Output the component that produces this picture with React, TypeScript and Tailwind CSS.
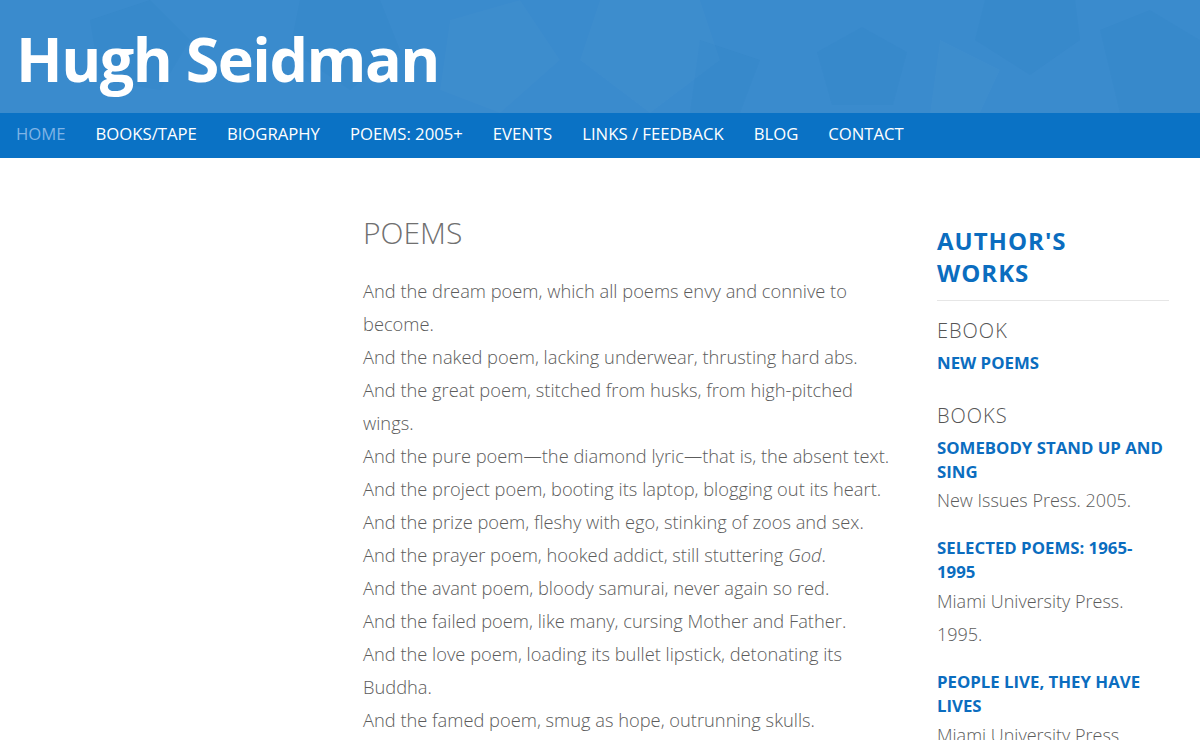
import React from "react";

const nav = ["HOME", "BOOKS/TAPE", "BIOGRAPHY", "POEMS: 2005+", "EVENTS", "LINKS / FEEDBACK", "BLOG", "CONTACT"];

const poem: React.ReactNode[] = [
  "And the dream poem, which all poems envy and connive to become.",
  "And the naked poem, lacking underwear, thrusting hard abs.",
  "And the great poem, stitched from husks, from high-pitched wings.",
  "And the pure poem\u2014the diamond lyric\u2014that is, the absent text.",
  "And the project poem, booting its laptop, blogging out its heart.",
  "And the prize poem, fleshy with ego, stinking of zoos and sex.",
  <>And the prayer poem, hooked addict, still stuttering <em>God</em>.</>,
  "And the avant poem, bloody samurai, never again so red.",
  "And the failed poem, like many, cursing Mother and Father.",
  "And the love poem, loading its bullet lipstick, detonating its Buddha.",
  "And the famed poem, smug as hope, outrunning skulls.",
  "And the last poem, fading out like the light.",
];

function Pattern() {
  return (
    <svg className="absolute inset-0 h-full w-full" viewBox="0 0 1200 113" preserveAspectRatio="none">
      <g fill="#1f6fb3" fillOpacity="0.07">
        <polygon points="817,52 862,27 907,52 893,105 832,105" />
        <polygon points="985,0 1075,0 1080,40 1030,75 975,40" />
        <polygon points="90,20 150,0 190,40 160,90 100,80" />
        <polygon points="300,0 380,0 400,50 350,90 290,50" />
        <polygon points="1100,30 1150,10 1200,40 1200,113 1120,113" />
        <polygon points="700,40 760,60 740,113 690,113" />
      </g>
      <g fill="#ffffff" fillOpacity="0.02">
        <polygon points="600,0 700,0 720,60 650,113 580,60" />
        <polygon points="940,40 1000,70 980,113 930,113" />
        <polygon points="450,20 520,0 560,60 500,113 440,90" />
      </g>
    </svg>
  );
}

export default function App() {
  return (
    <div className="min-h-[740px] bg-white" style={{ fontFamily: '"Open Sans", "Noto Sans", sans-serif' }}>
      <header>
        <div className="relative h-[113px] overflow-hidden bg-[#3a8bcd]">
          <Pattern />
          <h1 className="relative pl-[16px] pt-[19px] text-[61px] font-bold leading-[80px] tracking-[-1.5px] text-white">
            Hugh Seidman
          </h1>
        </div>
        <nav className="flex h-[45px] items-center gap-[30px] bg-[#0a72c5] pb-[3px] pl-[16px] text-[16.7px] text-white">
          {nav.map((n, i) => (
            <span key={n} className={i === 0 ? "text-[#7fb4e6]" : "text-white"}>
              {n}
            </span>
          ))}
        </nav>
      </header>
      <div className="flex pt-[55px]">
        <main className="ml-[363px] w-[535px]">
          <h2 className="text-[30px] font-light leading-[40px] text-[#707070]">POEMS</h2>
          <div className="mt-[21px] text-[18.3px] font-light leading-[33px] text-[#5c5c5c]">
            {poem.map((l, i) => (
              <p key={i}>{l}</p>
            ))}
          </div>
        </main>
        <aside className="ml-[39px] w-[232px] pt-[12px]">
          <h3 className="text-[24px] font-bold leading-[32px] tracking-[1px] text-[#0b6dbf]">
            AUTHOR'S
            <br />
            WORKS
          </h3>
          <div className="mt-[11px] h-px bg-[#e6e6e6]" />
          <div className="mt-[16px] text-[20px] font-light leading-[28px] tracking-[1px] text-[#555]">EBOOK</div>
          <div className="mt-[6px] text-[16.8px] font-bold leading-[24px] text-[#0b6dbf]">NEW POEMS</div>
          <div className="mt-[27px] text-[20px] font-light leading-[28px] tracking-[1px] text-[#555]">BOOKS</div>
          <div className="mt-[6px] text-[16.8px] font-bold leading-[24px] text-[#0b6dbf]">SOMEBODY STAND UP AND SING</div>
          <div className="text-[18px] font-light leading-[33px] text-[#5c5c5c]">New Issues Press. 2005.</div>
          <div className="mt-[19px] text-[16.8px] font-bold leading-[24px] text-[#0b6dbf]">SELECTED POEMS: 1965-1995</div>
          <div className="mt-[1px] text-[18px] font-light leading-[33px] text-[#5c5c5c]">Miami University Press. 1995.</div>
          <div className="mt-[19px] text-[16.8px] font-bold leading-[24px] text-[#0b6dbf]">PEOPLE LIVE, THEY HAVE LIVES</div>
          <div className="mt-[1px] text-[18px] font-light leading-[33px] text-[#5c5c5c]">Miami University Press. 2003.</div>
        </aside>
      </div>
    </div>
  );
}
